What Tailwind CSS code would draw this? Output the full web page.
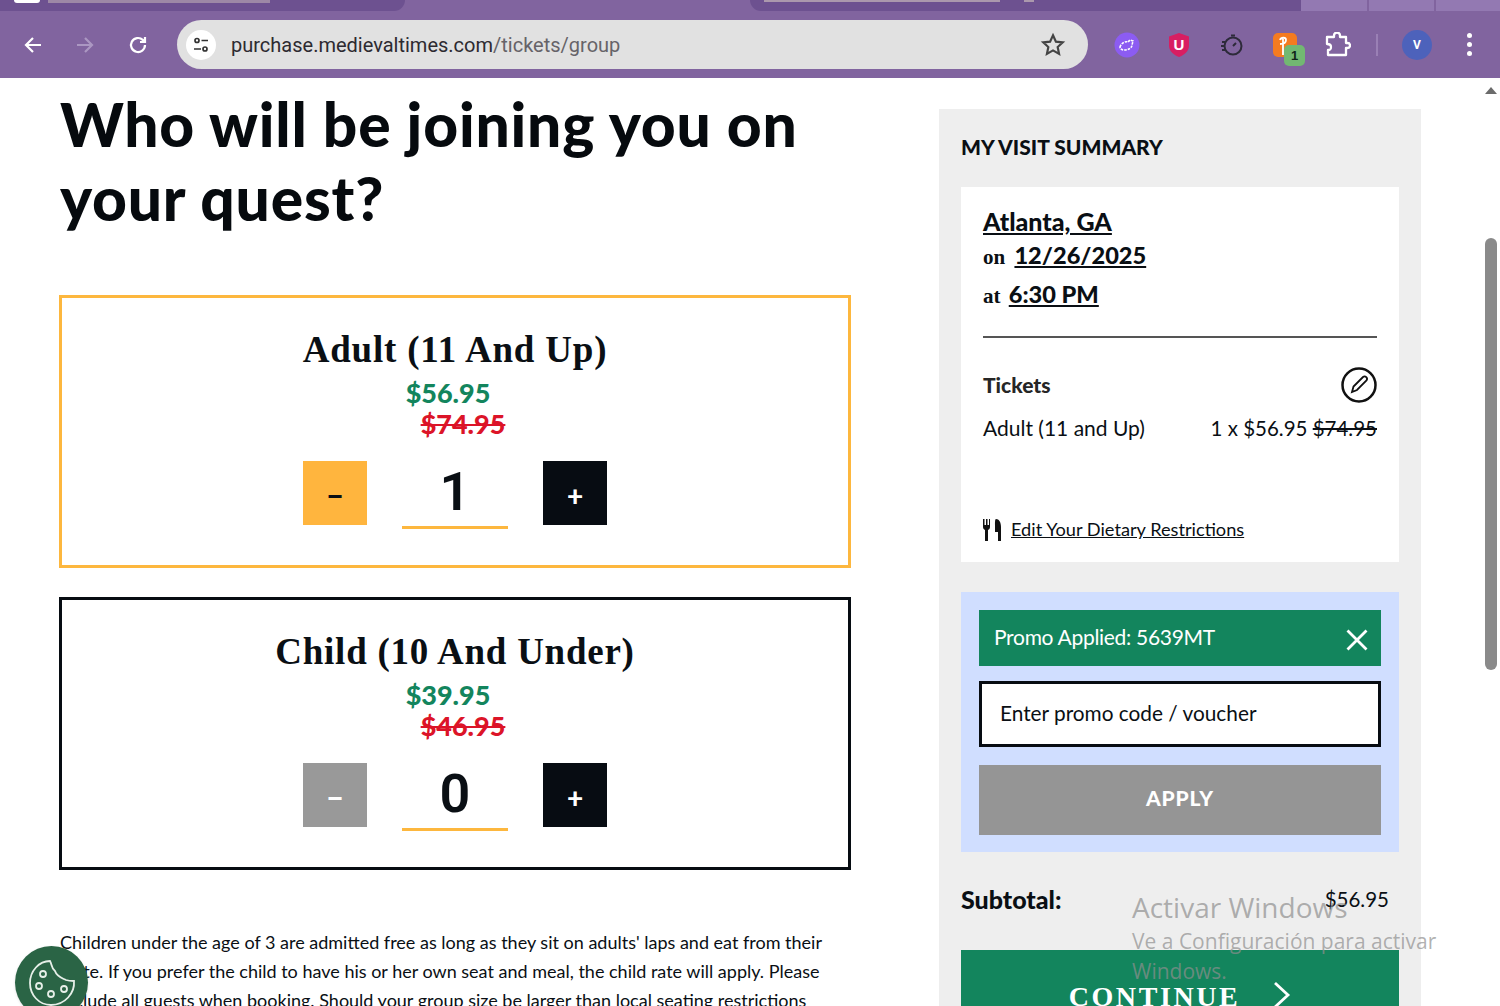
<!DOCTYPE html>
<html lang="en">
<head>
  <meta charset="UTF-8" />
  <meta name="viewport" content="width=device-width, initial-scale=1.0" />
  <title>Medieval Times - Tickets</title>
  <script src="https://cdn.jsdelivr.net/npm/@tailwindcss/browser@4"></script>
</head>
<body class="relative h-[1006px] w-[1500px] overflow-hidden bg-white font-['Lato',sans-serif] text-[#0a0f14]">

  <!-- browser chrome -->
  <header class="h-[78px] bg-[#81649f]">
    <div class="flex h-[11px] items-start">
      <div class="flex h-[11px] w-[405px] items-start rounded-br-[12px] bg-[#6d5190]">
        <div class="ml-[14px] h-[3px] w-[26px] rounded-b bg-white"></div>
        <div class="ml-[8px] h-[3px] w-[222px] bg-[#9d88a6]"></div>
      </div>
      <div class="ml-[345px] flex h-[11px] w-[551px] items-start rounded-bl-[12px] bg-[#6d5190]">
        <div class="ml-[14px] h-[2px] w-[236px] bg-[#ab98ad]"></div>
        <div class="ml-[24px] h-[2px] w-[10px] bg-[#ab98ad]"></div>
      </div>
      <div class="flex h-[11px]">
        <div class="w-[66px] bg-[#9379b2]"></div>
        <div class="ml-[2px] w-[65px] bg-[#9379b2]"></div>
        <div class="ml-[2px] w-[64px] bg-[#9379b2]"></div>
      </div>
    </div>
    <div class="flex h-[67px] items-center">
      <div class="flex w-[177px] items-center">
        <svg class="ml-[21px] h-6 w-6" viewBox="0 0 24 24" fill="none" stroke="#fff" stroke-width="2.2"><path d="M20 12H5M12 5l-7 7 7 7"/></svg>
        <svg class="ml-[28px] h-6 w-6" viewBox="0 0 24 24" fill="none" stroke="#ab97c2" stroke-width="2.2"><path d="M4 12h15M12 5l7 7-7 7"/></svg>
        <svg class="ml-[29px] h-6 w-6" viewBox="0 0 24 24" fill="none" stroke="#fff" stroke-width="2.2"><path d="M19 12a7 7 0 1 1-2.2-5.1L19 9M19 4v5h-5"/></svg>
      </div>
      <div class="flex h-[49px] w-[911px] items-center rounded-full bg-[#e1e1e1]">
        <div class="ml-[9px] flex h-[30px] w-[30px] items-center justify-center rounded-full bg-white">
          <svg class="h-[18px] w-[18px]" viewBox="0 0 18 18" fill="none" stroke="#333" stroke-width="1.7"><circle cx="5" cy="4.5" r="2"/><path d="M9.500 4.500H16M2 13h7"/><circle cx="13" cy="13" r="2"/></svg>
        </div>
        <span class="ml-[15px] font-['Roboto',sans-serif] text-[20px] text-[#2d2a30]">purchase.medievaltimes.com<span class="text-[#666368]">/tickets/group</span></span>
        <svg class="ml-auto mr-[22px] h-[26px] w-[26px]" viewBox="0 0 24 24" fill="none" stroke="#444" stroke-width="2"><path d="M12 3l2.700 5.900 6.300.7-4.700 4.300 1.300 6.300-5.600-3.200-5.600 3.200 1.300-6.300L3 9.600l6.300-.7z"/></svg>
      </div>
      <div class="flex flex-1 items-center">
        <svg class="ml-[26px] h-[26px] w-[26px]" viewBox="0 0 26 26"><circle cx="13" cy="13" r="12.500" fill="#8c5cf2"/><path d="M6 15c1-4 6-6 8-5l2-2 3 1-1 4c0 3-4 5-8 5-2 0-4-1-4-3z" fill="none" stroke="#fff" stroke-width="1.600" stroke-dasharray="2.500 1"/></svg>
        <svg class="ml-[27px] h-[26px] w-[24px]" viewBox="0 0 24 26"><path d="M12 1l10 3.500V14c0 5-5 9-10 11C7 23 2 19 2 14V4.500z" fill="#d81e62"/><text x="12" y="18" text-anchor="middle" font-family="Liberation Sans" font-weight="700" font-size="15" fill="#fff">U</text></svg>
        <svg class="ml-[29px] h-[24px] w-[24px]" viewBox="0 0 24 24" fill="none" stroke="#2d2a3a" stroke-width="2"><circle cx="13" cy="13" r="8.500"/><path d="M13 13l3-3M11 2.500h4M1 13h4M2 9h3M2 17h3"/></svg>
        <div class="relative ml-[29px] h-6 w-6 rounded-[5px] bg-[#f47b20]">
          <svg class="h-6 w-6" viewBox="0 0 24 24" fill="none" stroke="#fff" stroke-width="1.800"><path d="M10 22V6M7 7c1-3 6-3 6 0s-3 4-6 4"/></svg>
          <span class="absolute left-[11px] top-[12px] h-[21px] w-[21px] rounded-[5px] bg-[#72b872] text-center font-['Liberation_Sans',sans-serif] text-[13px] font-bold leading-[21px] text-[#10241a]">1</span>
        </div>
        <svg class="ml-[28px] h-[26px] w-[26px]" viewBox="0 0 26 26" fill="none" stroke="#fff" stroke-width="2.300" stroke-linejoin="round"><path d="M2 5h7V3.500a3 3 0 0 1 6 0V5h6v6h1.500a2.500 2.500 0 0 1 0 5H21v7H3v-5c3 0 3-1 3-3s-1-3-4-3z"/></svg>
        <div class="ml-[25px] h-[22px] w-[2px] bg-[#9a80b5]"></div>
        <div class="ml-[24px] flex h-[30px] w-[30px] items-center justify-center rounded-full bg-[#4d62bb] font-['Roboto',sans-serif] text-[12px] font-bold text-white">V</div>
        <div class="ml-[35px] flex flex-col gap-[4px]">
          <span class="h-[5px] w-[5px] rounded-full bg-white"></span>
          <span class="h-[5px] w-[5px] rounded-full bg-white"></span>
          <span class="h-[5px] w-[5px] rounded-full bg-white"></span>
        </div>
      </div>
    </div>
  </header>

  <main class="flex items-start">
    <!-- ticket picker -->
    <section class="ml-[59px] w-[792px]">
      <h1 class="ml-px mt-[9px] text-[60.500px] font-black leading-[74px] tracking-[0.8px] text-[#060a0e]">Who will be joining you on your quest?</h1>

      <div class="mt-[60px] flex h-[273px] flex-col items-center border-[3px] border-[#fdb73e] pt-[29px]">
        <h2 class="font-['Liberation_Serif',serif] text-[37px] font-bold leading-[46px] tracking-[0.8px]">Adult (11 And Up)</h2>
        <p class="mr-[14px] mt-[4px] text-[27px] font-black leading-[31px] text-[#13855d]">$56.95</p>
        <p class="ml-[16px] text-[27px] font-black leading-[31px] text-[#dc1428] line-through">$74.95</p>
        <div class="mt-[22px] flex items-start">
          <button class="flex h-16 w-16 items-center justify-center bg-[#ffb53e] pt-[2px] text-[32px] font-black">–</button>
          <div class="mx-[35px] h-[68px] w-[106px] border-b-[3px] border-[#fdb73e] text-center font-['Roboto',sans-serif] text-[54px] font-semibold leading-[62px]">1</div>
          <button class="flex h-16 w-16 items-center justify-center bg-[#070c12] pt-[4px] text-[28px] font-black text-white">+</button>
        </div>
      </div>

      <div class="mt-[29px] flex h-[273px] flex-col items-center border-[3px] border-[#070c12] pt-[29px]">
        <h2 class="font-['Liberation_Serif',serif] text-[37px] font-bold leading-[46px] tracking-[0.75px]">Child (10 And Under)</h2>
        <p class="mr-[14px] mt-[4px] text-[27px] font-black leading-[31px] text-[#13855d]">$39.95</p>
        <p class="ml-[16px] text-[27px] font-black leading-[31px] text-[#dc1428] line-through">$46.95</p>
        <div class="mt-[22px] flex items-start">
          <button class="flex h-16 w-16 items-center justify-center bg-[#999999] pt-[2px] text-[32px] font-black text-white">–</button>
          <div class="mx-[35px] h-[68px] w-[106px] border-b-[3px] border-[#fdb73e] text-center font-['Roboto',sans-serif] text-[54px] font-semibold leading-[62px]">0</div>
          <button class="flex h-16 w-16 items-center justify-center bg-[#070c12] pt-[4px] text-[28px] font-black text-white">+</button>
        </div>
      </div>

      <p class="ml-px mt-[58px] w-[780px] text-[18px] leading-[29px]">Children under the age of 3 are admitted free as long as they sit on adults' laps and eat from their plate. If you prefer the child to have his or her own seat and meal, the child rate will apply. Please include all guests when booking. Should your group size be larger than local seating restrictions</p>
    </section>

    <!-- visit summary -->
    <aside class="ml-[88px] mt-[31px] h-[900px] w-[482px] bg-[#eeeeee] px-[22px]">
      <h3 class="pt-[24px] text-[21px] font-black leading-[28px]">MY VISIT SUMMARY</h3>
      <div class="mt-[26px] h-[375px] bg-white px-[22px] pt-[17px]">
        <a class="text-[25px] font-black leading-[34px] underline">Atlanta, GA</a>
        <div class="font-['Liberation_Serif',serif] text-[21px] font-bold leading-[34px]">on <a class="ml-[4px] font-['Lato',sans-serif] text-[23.600px] font-black underline">12/26/2025</a></div>
        <div class="mt-[3px] font-['Liberation_Serif',serif] text-[21px] font-bold leading-[34px]">at <a class="ml-[3px] font-['Lato',sans-serif] text-[23.600px] font-black underline">6:30 PM</a></div>
        <div class="mt-[23px] border-t-2 border-[#555555]"></div>
        <div class="mt-[29px] flex items-center justify-between">
          <span class="text-[21px] font-black text-[#262626]">Tickets</span>
          <svg class="h-9 w-9" viewBox="0 0 36 36" fill="none" stroke="#111" stroke-width="2.500"><circle cx="18" cy="18" r="16.500"/><path stroke-width="1.800" d="M11 25l1.500-5.500L22 10a2.500 2.500 0 0 1 3.500 3.500L16 23z"/></svg>
        </div>
        <div class="mt-[10px] flex justify-between text-[21px] leading-[30px]">
          <span>Adult (11 and Up)</span>
          <span class="text-[20.500px]">1 x $56.95 <span class="line-through">$74.95</span></span>
        </div>
        <div class="mt-[73px] flex items-center">
          <svg class="h-[22px] w-[19px]" viewBox="0 0 19 22" fill="#111"><path d="M0 0h1.500v6h1.500V0h1.500v6h1.500V0H7v8c0 1.500-1 2.500-2 3v11H2V11C1 10.500 0 9.500 0 8zM13 0c3 0 5 3 5 8v14h-3v-9h-3V6c0-3 0-6 1-6z"/></svg>
          <a class="ml-[9px] text-[18.200px] underline">Edit Your Dietary Restrictions</a>
        </div>
      </div>

      <div class="mt-[30px] h-[260px] bg-[#d0deff] p-[18px]">
        <div class="flex h-[56px] items-center justify-between bg-[#13855d] pl-[15px] pr-[13px] text-[21px] tracking-[-0.3px] text-white">
          <span class="mb-[3px]">Promo Applied: 5639MT</span>
          <svg class="mt-[3px] h-[22px] w-[22px]" viewBox="0 0 22 22" stroke="#fff" stroke-width="2.800"><path d="M1.500 1.500l19 19M20.500 1.500l-19 19"/></svg>
        </div>
        <div class="mt-[15px] flex h-[66px] items-center border-[3px] border-[#070c12] bg-white pb-[2px] pl-[18px] text-[20.800px]">Enter promo code / voucher</div>
        <button class="mt-[18px] h-[70px] w-full bg-[#959595] pb-[4px] text-[21px] font-black tracking-[0.8px] text-white">APPLY</button>
      </div>

      <div class="mt-[29px] flex items-center justify-between pr-[10px]">
        <span class="text-[25px] font-black">Subtotal:</span>
        <span class="text-[20.500px]">$56.95</span>
      </div>
      <button class="mt-[31px] flex h-[90px] w-full items-start justify-center bg-[#13855d] pt-[29px] text-white">
        <span class="font-['Liberation_Serif',serif] text-[28px] font-bold leading-[36px] tracking-[2.600px]">CONTINUE</span>
        <svg class="ml-[33px] mt-[2px] h-[28px] w-[18px]" viewBox="0 0 18 28" fill="none" stroke="#fff" stroke-width="2.800"><path d="M2 2l13 12L2 26"/></svg>
      </button>
    </aside>
  </main>

  <!-- page scrollbar -->
  <div class="absolute left-[1483px] top-[78px] h-[928px] w-[17px] bg-white">
    <div class="absolute left-[2px] top-[9px] h-0 w-0 border-x-[6px] border-b-[7px] border-x-transparent border-b-[#6b6b6b]"></div>
    <div class="absolute left-[2px] top-[160px] h-[432px] w-[12px] rounded-full bg-[#8a8a8a]"></div>
  </div>

  <!-- cookie settings button -->
  <button class="absolute left-[15px] top-[946px] flex h-[73px] w-[73px] items-center justify-center rounded-full bg-[#2a6445] shadow">
    <svg class="h-[50px] w-[50px]" viewBox="0 0 50 50" fill="none" stroke="#e6efe8" stroke-width="1.800"><path d="M23 3c2 3 1 7 5 10 2 6 7 7 11 9 3 1 6 1 8 1 1 12-9 24-23 24C12 47 3 37 3 25 3 13 12 3 23 3z"/><circle cx="16" cy="16" r="3"/><circle cx="12" cy="28" r="3"/><circle cx="24" cy="36" r="3"/><circle cx="37" cy="31" r="3"/></svg>
  </button>

  <!-- activation watermark -->
  <div class="pointer-events-none absolute left-[1132px] top-[889px] font-['Open_Sans',sans-serif] text-[#8f8f8f]/70">
    <div class="text-[28px] leading-[37px]">Activar Windows</div>
    <div class="w-[320px] text-[21px] leading-[30px]">Ve a Configuración para activar Windows.</div>
  </div>
</body>
</html>
